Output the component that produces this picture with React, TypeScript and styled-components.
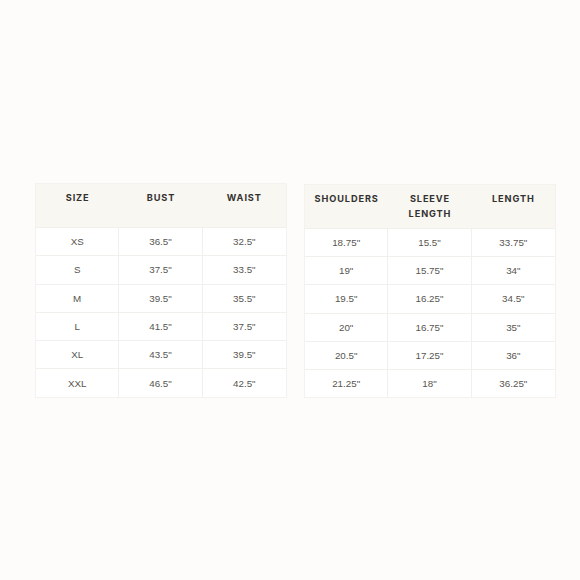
import React from "react";
import styled, { createGlobalStyle } from "styled-components";

const GlobalStyle = createGlobalStyle`
  html, body {
    margin: 0;
    padding: 0;
    background: #fdfcfa;
  }
`;

const Page = styled.div`
  width: 580px;
  height: 580px;
  box-sizing: border-box;
  padding: 183px 23px 0 35px;
  display: flex;
  align-items: flex-start;
  gap: 17px;
`;

const Table = styled.div<{ $top: number; $head: number; $row: number }>`
  width: 252px;
  margin-top: ${({ $top }) => $top}px;
  display: grid;
  grid-template-columns: repeat(3, 1fr);
  grid-template-rows: ${({ $head }) => $head}px repeat(6, ${({ $row }) => $row}px);
  background: #ffffff;
  border: 1px solid #f3f2ee;
  box-sizing: border-box;
`;

const HeadCell = styled.div`
  background: #f9f7f2;
  padding-top: 6px;
  text-align: center;
  font-family: Inter, "Liberation Sans", sans-serif;
  font-weight: 700;
  font-size: 9.2px;
  line-height: 15px;
  letter-spacing: 0.9px;
  color: #333230;
`;

const Cell = styled.div<{ $right: boolean }>`
  display: flex;
  align-items: center;
  justify-content: center;
  border-top: 1px solid #f1f0ec;
  border-right: ${({ $right }) => ($right ? "1px solid #f1f0ec" : "none")};
  font-family: "Liberation Sans", Arial, sans-serif;
  font-size: 9.8px;
  color: #57554f;
`;

type Props = {
  heads: string[][];
  rows: string[][];
  top: number;
  head: number;
  row: number;
};

function SizeTable({ heads, rows, top, head, row }: Props) {
  return (
    <Table $top={top} $head={head} $row={row}>
      {heads.map((h, i) => (
        <HeadCell key={i}>
          {h.map((line, j) => (
            <div key={j}>{line}</div>
          ))}
        </HeadCell>
      ))}
      {rows.map((r, i) =>
        r.map((v, j) => (
          <Cell key={`${i}-${j}`} $right={j < 2}>
            {v}
          </Cell>
        ))
      )}
    </Table>
  );
}

const left = [
  ["XS", "36.5\"", "32.5\""],
  ["S", "37.5\"", "33.5\""],
  ["M", "39.5\"", "35.5\""],
  ["L", "41.5\"", "37.5\""],
  ["XL", "43.5\"", "39.5\""],
  ["XXL", "46.5\"", "42.5\""],
];

const right = [
  ["18.75\"", "15.5\"", "33.75\""],
  ["19\"", "15.75\"", "34\""],
  ["19.5\"", "16.25\"", "34.5\""],
  ["20\"", "16.75\"", "35\""],
  ["20.5\"", "17.25\"", "36\""],
  ["21.25\"", "18\"", "36.25\""],
];

export default function App() {
  return (
    <>
      <GlobalStyle />
      <Page>
        <SizeTable
          heads={[["SIZE"], ["BUST"], ["WAIST"]]}
          rows={left}
          top={0}
          head={43}
          row={28.3}
        />
        <SizeTable
          heads={[["SHOULDERS"], ["SLEEVE", "LENGTH"], ["LENGTH"]]}
          rows={right}
          top={1}
          head={43}
          row={28.2}
        />
      </Page>
    </>
  );
}
